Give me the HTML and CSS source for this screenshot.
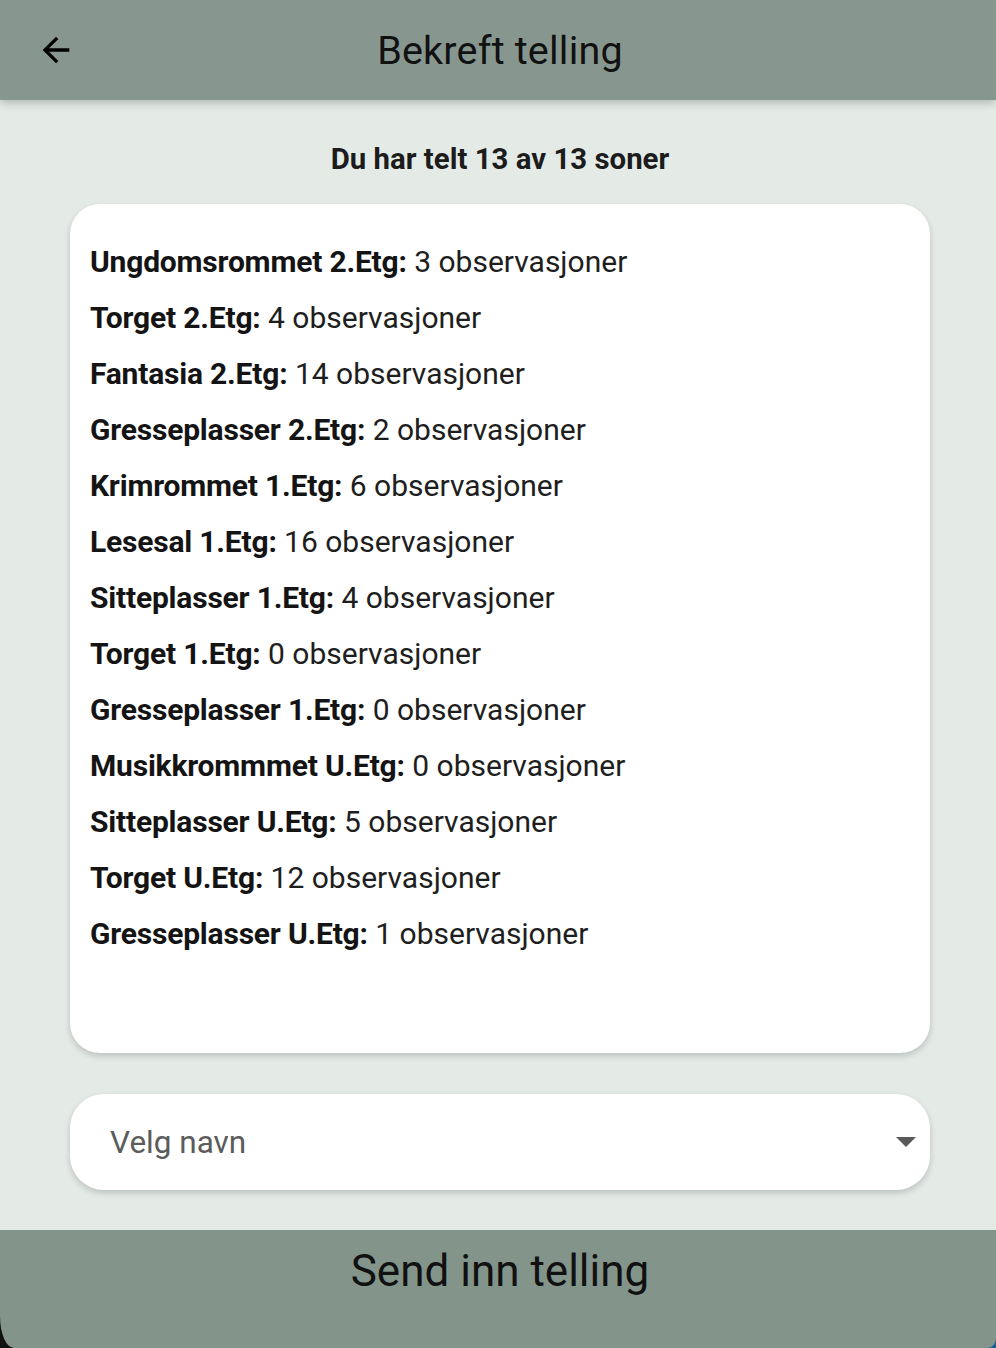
FILE: index.html
```html
<!DOCTYPE html>
<html lang="no">
<head>
<meta charset="utf-8">
<title>Bekreft telling</title>
<link rel="stylesheet" href="styles.css">
</head>
<body>
<div class="screen">
  <header class="appbar">
    <button class="back" aria-label="Tilbake">
      <svg viewBox="0 0 24 24" width="40" height="40"><path d="M20 11H7.83l5.59-5.59L12 4l-8 8 8 8 1.41-1.41L7.83 13H20v-2z" fill="#000"/></svg>
    </button>
    <h1 class="title">Bekreft telling</h1>
  </header>
  <main class="content">
    <p class="summary">Du har telt 13 av 13 soner</p>
    <div class="card">
      <ul class="zones">
        <li><b>Ungdomsrommet 2.Etg:</b> 3 observasjoner</li>
        <li><b>Torget 2.Etg:</b> 4 observasjoner</li>
        <li><b>Fantasia 2.Etg:</b> 14 observasjoner</li>
        <li><b>Gresseplasser 2.Etg:</b> 2 observasjoner</li>
        <li><b>Krimrommet 1.Etg:</b> 6 observasjoner</li>
        <li><b>Lesesal 1.Etg:</b> 16 observasjoner</li>
        <li><b>Sitteplasser 1.Etg:</b> 4 observasjoner</li>
        <li><b>Torget 1.Etg:</b> 0 observasjoner</li>
        <li><b>Gresseplasser 1.Etg:</b> 0 observasjoner</li>
        <li><b>Musikkrommmet U.Etg:</b> 0 observasjoner</li>
        <li><b>Sitteplasser U.Etg:</b> 5 observasjoner</li>
        <li><b>Torget U.Etg:</b> 12 observasjoner</li>
        <li><b>Gresseplasser U.Etg:</b> 1 observasjoner</li>
      </ul>
    </div>
    <div class="select">
      <span class="placeholder">Velg navn</span>
      <span class="caret"></span>
    </div>
  </main>
  <div class="footer">
    <button class="submit">Send inn telling</button>
  </div>
</div>
</body>
</html>
```

FILE: styles.css
```css
* { box-sizing: border-box; }
html, body { margin: 0; padding: 0; }
body {
  width: 996px;
  height: 1348px;
  overflow: hidden;
  background: #e4ebe7;
  font-family: Roboto, "Liberation Sans", sans-serif;
  color: #1c1c1c;
}
.screen {
  display: flex;
  flex-direction: column;
  height: 1348px;
}
.appbar {
  position: relative;
  z-index: 1;
  height: 100px;
  background: #879790;
  display: flex;
  align-items: center;
  justify-content: center;
  padding-left: 4px;
  box-shadow: 0 3px 8px rgba(0,0,0,0.22);
}
.back {
  position: absolute;
  left: 36px;
  top: 30px;
  width: 40px;
  height: 40px;
  padding: 0;
  border: 0;
  background: transparent;
  display: flex;
}
.title {
  margin: 0;
  font-size: 39.5px;
  font-weight: 400;
  color: #111;
  letter-spacing: 0.2px;
}
.content {
  flex: 1;
  display: flex;
  flex-direction: column;
  align-items: stretch;
  padding: 0 66px 0 70px;
}
.summary {
  margin: 0;
  padding-top: 41px;
  height: 104px;
  font-size: 29.4px;
  font-weight: 700;
  color: #1c1c1c;
  line-height: 36px;
  text-align: center;
}
.card {
  height: 849px;
  background: #fff;
  border-radius: 30px;
  box-shadow: 0 3px 6px rgba(0,0,0,0.18);
  padding: 30px 20px;
}
.zones {
  list-style: none;
  margin: 0;
  padding: 0;
}
.zones li {
  height: 56px;
  line-height: 56px;
  font-size: 30px;
  color: #1e1e1e;
  white-space: nowrap;
}
.zones li b { font-weight: 700; color: #141414; letter-spacing: -0.2px; }
.select {
  margin-top: 41px;
  height: 96px;
  background: #fff;
  border-radius: 34px;
  box-shadow: 0 3px 6px rgba(0,0,0,0.18);
  display: flex;
  align-items: center;
  justify-content: space-between;
  padding: 0 14px 0 40px;
}
.placeholder {
  font-size: 31.5px;
  color: #5c5c5c;
}
.caret {
  width: 0;
  height: 0;
  border-left: 10px solid transparent;
  border-right: 10px solid transparent;
  border-top: 10px solid #5a5a5a;
}
.footer {
  height: 118px;
  background: linear-gradient(to right, #111 50%, #1b5d8f 50%);
}
.submit {
  width: 100%;
  height: 100%;
  border: 0;
  background: #83958b;
  border-radius: 0 0 8px 14px / 0 0 10px 32px;
  font-family: Roboto, "Liberation Sans", sans-serif;
  font-size: 44px;
  color: #111;
  padding: 13px 0 0 4px;
  display: flex;
  justify-content: center;
  align-items: flex-start;
  line-height: 56px;
}
```
